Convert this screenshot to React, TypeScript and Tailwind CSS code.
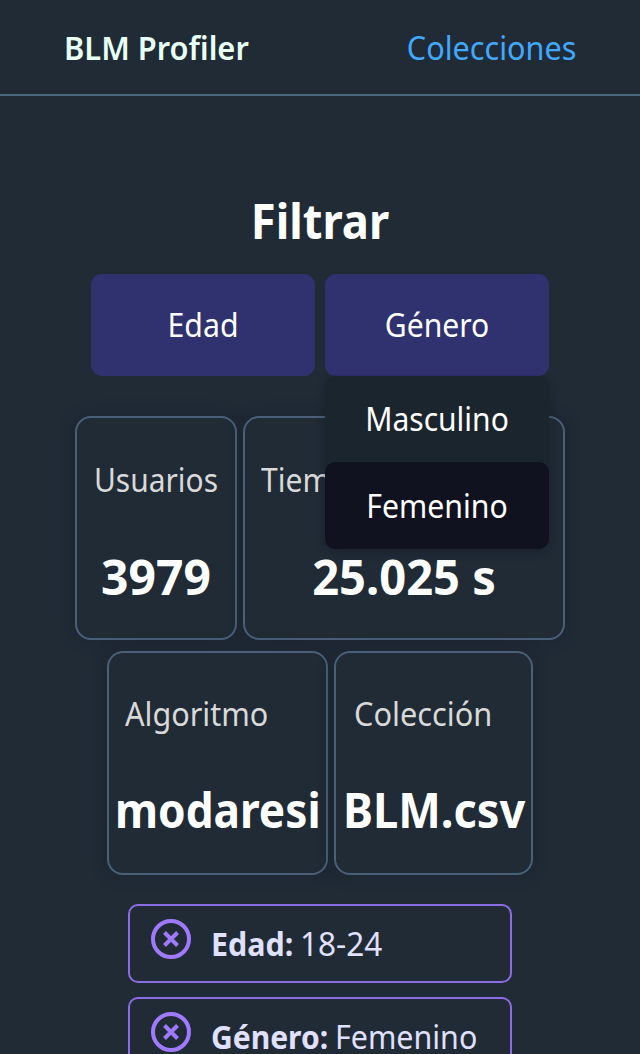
import type { ReactNode } from "react";

function Stat({ box, label, value, bodyClass, labelClass, valueClass }: { box: string; label: string; value: string; bodyClass: string; labelClass: string; valueClass: string }) {
  return (
    <article className={`flex shrink-0 flex-col rounded-[16px] border-2 border-[#4a6078] bg-[#202b36] whitespace-nowrap shadow-[0_0_16px_rgba(25,28,40,0.4)] ${bodyClass} ${box}`}>
      <p className={`h-[52px] origin-left text-[32px] leading-[52px] text-[#d9d9d9] ${labelClass}`}>{label}</p>
      <p className={`h-[64px] text-[48px] leading-[64px] font-bold text-white ${valueClass}`}>{value}</p>
    </article>
  );
}

function Chip({ children }: { children: ReactNode }) {
  return (
    <li className="flex h-[79px] w-[384px] shrink-0 rounded-[10px] border-2 border-[#8c6ce4] pl-[21px]">
      <svg className="mt-[13px] size-[40px] shrink-0" viewBox="0 0 40 40" fill="none" stroke="#9f7aff">
        <circle cx="20" cy="20" r="18" strokeWidth="4" />
        <path d="M13.5 13.5 26.5 26.5M26.5 13.5 13.5 26.5" strokeWidth="4" />
      </svg>
      <p className="ml-[20px] flex h-[75px] text-[32px] leading-[75px] whitespace-nowrap text-[#e0e0ff]">{children}</p>
    </li>
  );
}

export default function App() {
  return (
    <div className="h-[1054px] w-[640px] overflow-hidden bg-[#202b36] font-['Noto_Sans',sans-serif] text-white">
      <header className="flex h-[96px] items-start justify-between border-b-2 border-[#4d657f] pr-[64px] pl-[64px] text-[32px] leading-[96px] whitespace-nowrap">
        <a className="origin-left scale-x-[0.963] font-semibold text-[#e8fff4]">BLM Profiler</a>
        <a className="origin-right scale-x-[0.956] text-[#40a9ff]">Colecciones</a>
      </header>
      <main>
        <h1 className="mt-[93px] h-[64px] scale-x-[0.945] text-center text-[48px] leading-[64px] font-bold">Filtrar</h1>
        <div className="mt-[21px] flex justify-center gap-[10px] text-center text-[32px]">
          <button className="h-[102px] w-[224px] rounded-[11px] bg-[#30316f] leading-[102px]"><span className="block scale-x-[0.945]">Edad</span></button>
          <div className="relative h-[102px] w-[224px]">
            <button className="h-[102px] w-[224px] rounded-[11px] bg-[#30316f] leading-[102px]"><span className="block scale-x-[0.94]">Género</span></button>
            <ul className="absolute top-[102px] left-0 z-10 w-[224px] rounded-[11px] bg-[#1b252e] shadow-[0_3px_9px_rgba(15,18,28,0.35)]">
              <li className="h-[86px] leading-[86px]"><span className="block scale-x-[0.938]">Masculino</span></li>
              <li className="h-[87px] rounded-[10px] bg-[#111220] leading-[88px]"><span className="block scale-x-[0.944]">Femenino</span></li>
            </ul>
          </div>
        </div>
        <section className="mt-[40px] flex h-[224px] justify-center gap-[6px]">
          <Stat box="w-[162px] h-[224px]" label="Usuarios" value="3979" bodyClass="pt-[36px]" labelClass="ml-[17px] scale-x-[0.935]" valueClass="mt-[39px] text-center" />
          <Stat box="w-[322px] h-[224px]" label="Tiempo" value="25.025 s" bodyClass="pt-[36px]" labelClass="ml-[16px] scale-x-[0.94]" valueClass="mt-[39px] scale-x-[0.98] text-center" />
        </section>
        <section className="mt-[11px] flex h-[224px] justify-center gap-[6px]">
          <Stat box="w-[221px] h-[224px]" label="Algoritmo" value="modaresi" bodyClass="pt-[35px]" labelClass="ml-[16px] scale-x-[0.955]" valueClass="mt-[38px] ml-[6px] origin-left scale-x-[0.92]" />
          <Stat box="w-[199px] h-[224px]" label="Colección" value="BLM.csv" bodyClass="pt-[35px]" labelClass="ml-[18px] scale-x-[0.96]" valueClass="mt-[38px] ml-[7px] origin-left scale-x-[0.94]" />
        </section>
        <ul className="mt-[29px] flex flex-col items-center gap-[14px]">
          <Chip>
            <b className="w-[89px] origin-left scale-x-[0.95]">Edad:</b>
            <span className="origin-left scale-x-[0.985]">18-24</span>
          </Chip>
          <Chip>
            <b className="w-[124px] origin-left scale-x-[0.938]">Género:</b>
            <span className="origin-left scale-x-[0.95]">Femenino</span>
          </Chip>
        </ul>
      </main>
    </div>
  );
}
